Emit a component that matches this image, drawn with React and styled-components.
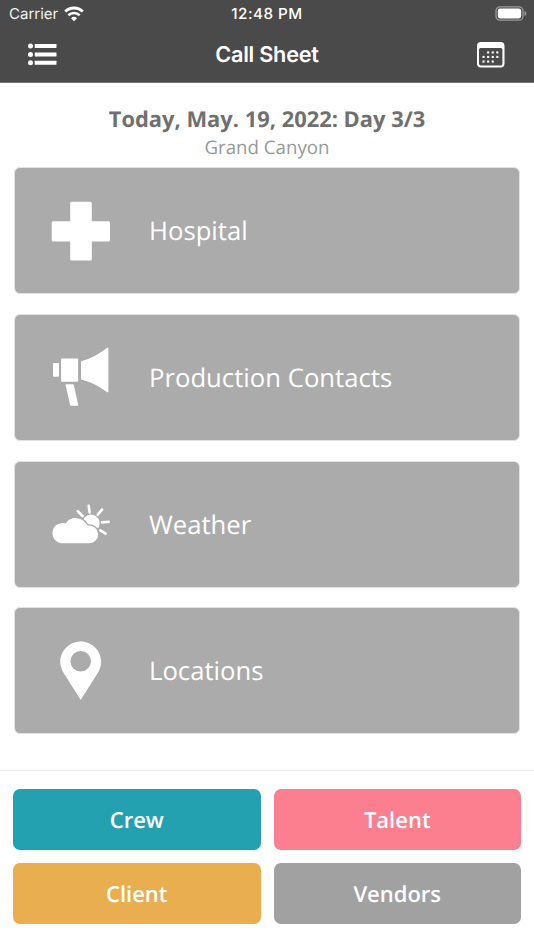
import React from "react";
import styled, { createGlobalStyle } from "styled-components";

const dark = "#4A4A4A";
const grey = "#ABABAB";
const uiFont = `Inter, "Liberation Sans", sans-serif`;

const GlobalStyle = createGlobalStyle`
  * {
    box-sizing: border-box;
  }
  body {
    margin: 0;
    background-color: white;
    font-family: "Open Sans", "Noto Sans", sans-serif;
    text-rendering: geometricPrecision;
  }
  svg {
    display: block;
    flex: none;
  }
`;

const Screen = styled.div`
  display: flex;
  flex-direction: column;
  height: 950px;
  width: 100%;
  overflow: hidden;
`;

const Header = styled.header`
  height: 83px;
  background-color: ${dark};
  border-bottom: 1px solid #757575;
  color: white;
  font-family: ${uiFont};
`;

const StatusBar = styled.div`
  display: grid;
  grid-template-columns: 1fr auto 1fr;
  align-items: center;
  height: 27px;
  padding: 0 7px 0 9px;
`;

const Carrier = styled.div`
  display: flex;
  align-items: center;
  gap: 6px;
  font-size: 15px;
  color: #f2f2f2;
`;

const Clock = styled.div`
  margin-right: 2px;
  font-size: 15.2px;
  font-weight: 500;
  letter-spacing: 0.5px;
`;

const Battery = styled.div`
  display: flex;
  justify-content: flex-end;
`;

const NavBar = styled.div`
  display: flex;
  justify-content: space-between;
  align-items: center;
  height: 55px;
  padding: 0 28px 0 27px;
`;

const NavTitle = styled.h1`
  margin: 0;
  font-size: 21.7px;
  font-weight: 570;
  letter-spacing: -0.25px;
`;

const Day = styled.div`
  height: 84px;
  padding-top: 22px;
  text-align: center;
`;

const DayTitle = styled.h2`
  margin: 0;
  font-size: 21.9px;
  line-height: 29px;
  font-weight: 700;
  color: #6f7070;
`;

const DayPlace = styled.p`
  margin: 0;
  font-size: 18.7px;
  line-height: 28px;
  color: #999;
`;

const CardList = styled.div`
  display: flex;
  flex-direction: column;
  gap: 19.8px;
  padding: 0 14px;
`;

const Card = styled.div`
  display: flex;
  align-items: center;
  gap: 38px;
  height: 127px;
  padding-left: 36px;
  border: 1px solid #e2e2e2;
  border-radius: 6px;
  background-color: ${grey};
  color: white;
  font-size: 25.7px;
`;

const Actions = styled.div`
  display: grid;
  grid-template-columns: 1fr 1fr;
  grid-auto-rows: 61px;
  gap: 13px;
  margin-top: auto;
  height: 180px;
  padding: 18px 13px 0;
  border-top: 1px solid #ececec;
`;

const ActionButton = styled.button`
  border: none;
  border-radius: 7px;
  padding: 1px 0 0;
  background-color: ${props => props.$color};
  color: white;
  font-family: inherit;
  font-size: 22px;
  font-weight: 600;
  text-rendering: inherit;
`;

const WifiIcon = () => (
  <svg width="20" height="16" viewBox="0 0 20 16" fill="none" stroke="white">
    <path d="M1.2 5.6a12.6 12.6 0 0 1 17.6 0" strokeWidth="2.8" />
    <path d="M4.3 9.3a8.2 8.2 0 0 1 11.4 0" strokeWidth="2.6" />
    <path d="M10 15.2l-3-3a4.3 4.3 0 0 1 6 0z" fill="white" stroke="none" />
  </svg>
);

const BatteryIcon = () => (
  <svg width="32" height="16" viewBox="0 0 32 16">
    <rect x="1" y="0.8" width="27" height="13.4" rx="4" fill="none" stroke="#9a9a9a" strokeWidth="1.3" />
    <rect x="2.8" y="2.6" width="23.4" height="9.8" rx="2.4" fill="white" />
    <path d="M29.5 5q1.9.7 1.9 2.5t-1.9 2.5z" fill="#9a9a9a" />
  </svg>
);

const ListIcon = () => (
  <svg width="30" height="24" viewBox="0 0.5 30 24" fill="white">
    {[3.5, 11.9, 20.3].map(y => (
      <g key={y}>
        <circle cx="3.5" cy={y} r="2.5" />
        <rect x="7.7" y={y - 2} width="21.8" height="4" rx="0.4" />
      </g>
    ))}
  </svg>
);

const calendarDots = [
  [11.6, 10.4], [16.2, 10.4], [20.8, 10.4],
  [7, 14.9], [11.6, 14.9], [16.2, 14.9], [20.8, 14.9],
  [7, 19.5], [11.6, 19.5], [16.2, 19.5]
];

const CalendarIcon = () => (
  <svg width="29" height="26" viewBox="0.5 0 29 26" fill="white">
    <path
      fillRule="evenodd"
      d="M4.5 0h19.5a4 4 0 0 1 4 4v17.6a4 4 0 0 1-4 4h-19.5a4 4 0 0 1-4-4V4a4 4 0 0 1 4-4zM2.5 7.6v13.8a2.2 2.2 0 0 0 2.2 2.2h19a2.2 2.2 0 0 0 2.2-2.2V7.6a1.5 1.5 0 0 0-1.5-1.5h-20.4a1.5 1.5 0 0 0-1.5 1.5z"
    />
    {calendarDots.map(([x, y]) => (
      <rect key={`${x}-${y}`} x={x - 1} y={y - 1} width="2.1" height="2.1" />
    ))}
  </svg>
);

const HospitalIcon = () => (
  <svg width="60" height="60" viewBox="0 0 60 60" fill="white">
    <rect x="19.2" y="0.7" width="21.6" height="58.8" rx="1.5" />
    <rect x="0.7" y="20.2" width="58.3" height="20.4" rx="1.5" />
  </svg>
);

const MegaphoneIcon = () => (
  <svg width="60" height="60" viewBox="0 0 60 60" fill="white">
    <rect x="2" y="16" width="6" height="13.7" rx="0.8" />
    <rect x="10.1" y="11.4" width="17" height="23.4" rx="0.8" />
    <path d="M30 15.2q0-.9.9-1.2Q44 10.2 55.9.9q1.5-.9 1.5.8v42.6q0 1.8-1.5.8Q44 36 30.9 32.7q-.9-.3-.9-1.2z" />
    <path d="M15.5 37.3h6.3q.8 0 1 .8l4.4 19.7q.2 1-.8 1h-6.2q-.8 0-1.1-.9L14.700 38.300q-.2-1 .8-1z" />
  </svg>
);

const WeatherIcon = () => (
  <svg width="60" height="60" viewBox="0 0 60 60" fill="white">
    <circle cx="40" cy="29.2" r="8.6" />
    <path
      d="M26.9 17.3l4.6 4.7M37.7 11.7l.9 7M51 15.6l-4.3 5.1M57.8 27.8l-6.8.6M54.6 39.7l-5.3-3.4"
      stroke="white"
      strokeWidth="2.6"
      strokeLinecap="round"
    />
    <path
      d="M11 49.9A10.8 10.8 0 1 1 14.400 28.700C19 21.600 31.500 21 37 31A9.500 9.500 0 1 1 38 49.900z"
      stroke={grey}
      strokeWidth="1.4"
    />
  </svg>
);

const PinIcon = () => (
  <svg width="60" height="60" viewBox="0 0 60 60" fill="white">
    <path
      fillRule="evenodd"
      d="M29.7.6C18.4.6 9.3 9.7 9.3 20.9c0 4 1.2 7.4 3.2 10.8L29.7 58.9l17.2-27.2c2-3.4 3.2-6.8 3.2-10.8C50.1 9.7 41 .6 29.7.6zM29.7 10a10.3 10.3 0 1 1 0 20.6 10.3 10.3 0 0 1 0-20.6z"
    />
  </svg>
);

const cards = [
  { name: "Hospital", Icon: HospitalIcon },
  { name: "Production Contacts", Icon: MegaphoneIcon },
  { name: "Weather", Icon: WeatherIcon },
  { name: "Locations", Icon: PinIcon }
];

const actions = [
  { name: "Crew", color: "#24A1B1" },
  { name: "Talent", color: "#FB7F8F" },
  { name: "Client", color: "#E8AE50" },
  { name: "Vendors", color: "#A1A1A1" }
];

const App = () => {
  return (
    <>
      <GlobalStyle />
      <Screen>
        <Header>
          <StatusBar>
            <Carrier>
              Carrier
              <WifiIcon />
            </Carrier>
            <Clock>12:48 PM</Clock>
            <Battery>
              <BatteryIcon />
            </Battery>
          </StatusBar>
          <NavBar>
            <ListIcon />
            <NavTitle>Call Sheet</NavTitle>
            <CalendarIcon />
          </NavBar>
        </Header>
        <Day>
          <DayTitle>Today, May. 19, 2022: Day 3/3</DayTitle>
          <DayPlace>Grand Canyon</DayPlace>
        </Day>
        <CardList>
          {cards.map(({ name, Icon }) => (
            <Card key={name}>
              <Icon />
              <span>{name}</span>
            </Card>
          ))}
        </CardList>
        <Actions>
          {actions.map(action => (
            <ActionButton key={action.name} $color={action.color}>
              {action.name}
            </ActionButton>
          ))}
        </Actions>
      </Screen>
    </>
  );
};

export default App;
